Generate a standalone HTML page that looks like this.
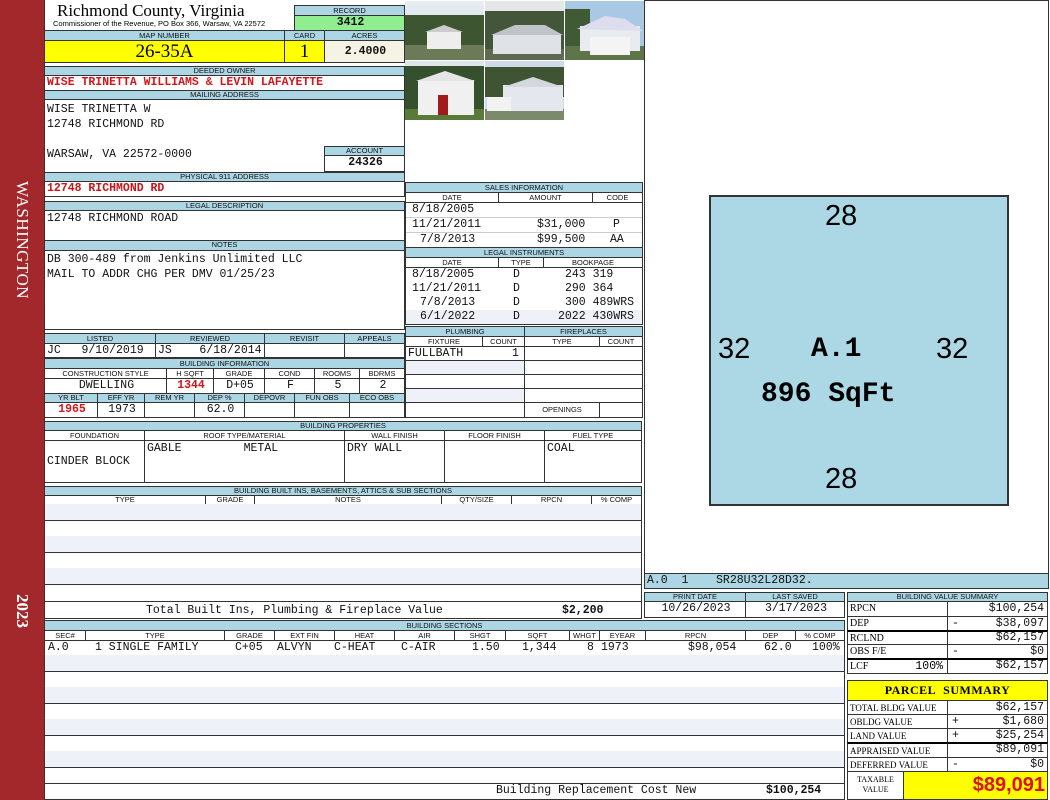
<!DOCTYPE html>
<html><head><meta charset="utf-8"><style>
*{margin:0;padding:0}
body{width:1050px;height:800px;position:relative;background:#fff;overflow:hidden;font-family:"Liberation Sans",sans-serif}
.b{position:absolute;box-sizing:border-box;border:1px solid #333;overflow:hidden;white-space:nowrap}
.h{background:#acd6e4;font-size:7.5px;text-align:center;line-height:8px;color:#111}
.v{font-family:"Liberation Mono",monospace;font-size:11.5px;line-height:14px;padding-left:2px;color:#111}
.c{text-align:center}.r{text-align:right;padding-right:3px}
.red{color:#d4141a;font-weight:bold}
.alt{background:#eef1f8}
.t{position:absolute;white-space:nowrap}
.s{font-family:"Liberation Serif",serif;font-size:10px;line-height:14px;padding-left:2px}
</style></head><body>
<!-- sidebar -->
<div style="position:absolute;left:0;top:0;width:44px;height:800px;background:#a3282b"></div>
<div class="t" style="left:22px;top:240px;transform:translate(-50%,-50%) rotate(90deg);color:#fff;font:17px 'Liberation Serif',serif;letter-spacing:0.5px">WASHINGTON</div>
<div class="t" style="left:22px;top:611px;transform:translate(-50%,-50%) rotate(90deg);color:#fff;font:bold 17px 'Liberation Serif',serif">2023</div>
<div style="position:absolute;left:44px;top:0;width:1px;height:800px;background:#333"></div>

<!-- title -->
<div class="t" style="left:57px;top:2px;font:17px 'Liberation Serif',serif;line-height:18px">Richmond County, Virginia</div>
<div class="t" style="left:53px;top:20px;font-size:7.5px;line-height:8px">Commissioner of the Revenue, PO Box 366, Warsaw, VA 22572</div>
<div class="b h" style="left:294px;top:5px;width:111px;height:11px;line-height:9px">RECORD</div>
<div class="b v c" style="left:294px;top:15px;width:111px;height:16px;background:#90ee90;font-weight:bold;line-height:13px">3412</div>

<div class="b h" style="left:44px;top:30px;width:241px;height:11px;line-height:9px">MAP NUMBER</div>
<div class="b h" style="left:284px;top:30px;width:41px;height:11px;line-height:9px">CARD</div>
<div class="b h" style="left:324px;top:30px;width:81px;height:11px;line-height:9px">ACRES</div>
<div class="b c" style="left:44px;top:40px;width:241px;height:23px;background:#ffff00;font:19px 'Liberation Serif',serif;line-height:21px">26-35A</div>
<div class="b c" style="left:284px;top:40px;width:41px;height:23px;background:#ffff00;font:19px 'Liberation Serif',serif;line-height:21px">1</div>
<div class="b v c" style="left:324px;top:40px;width:81px;height:23px;background:#f5f4e4;font-weight:bold;line-height:21px">2.4000</div>

<div class="b h" style="left:44px;top:66px;width:361px;height:10px">DEEDED OWNER</div>
<div class="b v red" style="left:44px;top:75px;width:361px;height:16px;line-height:14px">WISE TRINETTA WILLIAMS &amp; LEVIN LAFAYETTE</div>
<div class="b h" style="left:44px;top:90px;width:361px;height:10px">MAILING ADDRESS</div>
<div class="b v" style="left:44px;top:99px;width:361px;height:74px;line-height:15px;padding-top:2px">WISE TRINETTA W<br>12748 RICHMOND RD<br><br>WARSAW, VA 22572-0000</div>
<div class="b h" style="left:324px;top:146px;width:81px;height:10px">ACCOUNT</div>
<div class="b v c" style="left:324px;top:155px;width:81px;height:17px;font-weight:bold">24326</div>
<div class="b h" style="left:44px;top:172px;width:361px;height:10px">PHYSICAL 911 ADDRESS</div>
<div class="b v red" style="left:44px;top:181px;width:361px;height:16px;color:#c81418">12748 RICHMOND RD</div>
<div class="b h" style="left:44px;top:201px;width:361px;height:10px">LEGAL DESCRIPTION</div>
<div class="b v" style="left:44px;top:210px;width:361px;height:31px;padding-top:1px">12748 RICHMOND ROAD</div>
<div class="b h" style="left:44px;top:240px;width:361px;height:11px">NOTES</div>
<div class="b v" style="left:44px;top:250px;width:361px;height:80px;line-height:15px;padding-top:1px">DB 300-489 from Jenkins Unlimited LLC<br>MAIL TO ADDR CHG PER DMV 01/25/23</div>

<!-- listed -->
<div class="b h" style="left:44px;top:333px;width:112px;height:11px;line-height:9px">LISTED</div>
<div class="b h" style="left:155px;top:333px;width:110px;height:11px;line-height:9px">REVIEWED</div>
<div class="b h" style="left:264px;top:333px;width:81px;height:11px;line-height:9px">REVISIT</div>
<div class="b h" style="left:344px;top:333px;width:61px;height:11px;line-height:9px">APPEALS</div>
<div class="b v" style="left:44px;top:343px;width:112px;height:15px;line-height:13px">JC&nbsp;&nbsp;&nbsp;9/10/2019</div>
<div class="b v" style="left:155px;top:343px;width:110px;height:15px;line-height:13px">JS&nbsp;&nbsp;&nbsp;&nbsp;6/18/2014</div>
<div class="b" style="left:264px;top:343px;width:81px;height:15px"></div>
<div class="b" style="left:344px;top:343px;width:61px;height:15px"></div>

<div class="b h" style="left:44px;top:358px;width:361px;height:11px;line-height:9px">BUILDING INFORMATION</div>
<div class="b h" style="left:44px;top:368px;width:123px;height:11px;line-height:9px;background:#fff">CONSTRUCTION STYLE</div>
<div class="b h" style="left:166px;top:368px;width:48px;height:11px;line-height:9px;background:#fff">H SQFT</div>
<div class="b h" style="left:213px;top:368px;width:52px;height:11px;line-height:9px;background:#fff">GRADE</div>
<div class="b h" style="left:264px;top:368px;width:51px;height:11px;line-height:9px;background:#fff">COND</div>
<div class="b h" style="left:314px;top:368px;width:46px;height:11px;line-height:9px;background:#fff">ROOMS</div>
<div class="b h" style="left:359px;top:368px;width:46px;height:11px;line-height:9px;background:#fff">BDRMS</div>
<div class="b v c" style="left:44px;top:378px;width:123px;height:16px">DWELLING</div>
<div class="b v c red" style="left:166px;top:378px;width:48px;height:16px">1344</div>
<div class="b v c" style="left:213px;top:378px;width:52px;height:16px">D+05</div>
<div class="b v c" style="left:264px;top:378px;width:51px;height:16px">F</div>
<div class="b v c" style="left:314px;top:378px;width:46px;height:16px">5</div>
<div class="b v c" style="left:359px;top:378px;width:46px;height:16px">2</div>
<div class="b h" style="left:44px;top:393px;width:54px;height:10px">YR BLT</div>
<div class="b h" style="left:97px;top:393px;width:48px;height:10px">EFF YR</div>
<div class="b h" style="left:144px;top:393px;width:51px;height:10px">REM YR</div>
<div class="b h" style="left:194px;top:393px;width:51px;height:10px">DEP %</div>
<div class="b h" style="left:244px;top:393px;width:51px;height:10px">DEPOVR</div>
<div class="b h" style="left:294px;top:393px;width:56px;height:10px">FUN OBS</div>
<div class="b h" style="left:349px;top:393px;width:56px;height:10px">ECO OBS</div>
<div class="b v c red" style="left:44px;top:402px;width:54px;height:16px">1965</div>
<div class="b v c" style="left:97px;top:402px;width:48px;height:16px">1973</div>
<div class="b" style="left:144px;top:402px;width:51px;height:16px"></div>
<div class="b v c" style="left:194px;top:402px;width:51px;height:16px">62.0</div>
<div class="b" style="left:244px;top:402px;width:51px;height:16px"></div>
<div class="b" style="left:294px;top:402px;width:56px;height:16px"></div>
<div class="b" style="left:349px;top:402px;width:56px;height:16px"></div>

<!-- building properties -->
<div class="b h" style="left:44px;top:421px;width:598px;height:10px">BUILDING PROPERTIES</div>
<div class="b h" style="left:44px;top:430px;width:101px;height:11px;line-height:9px;background:#fff">FOUNDATION</div>
<div class="b h" style="left:144px;top:430px;width:201px;height:11px;line-height:9px;background:#fff">ROOF TYPE/MATERIAL</div>
<div class="b h" style="left:344px;top:430px;width:101px;height:11px;line-height:9px;background:#fff">WALL FINISH</div>
<div class="b h" style="left:444px;top:430px;width:101px;height:11px;line-height:9px;background:#fff">FLOOR FINISH</div>
<div class="b h" style="left:544px;top:430px;width:98px;height:11px;line-height:9px;background:#fff">FUEL TYPE</div>
<div class="b v" style="left:44px;top:440px;width:101px;height:43px;padding-top:14px">CINDER BLOCK</div>
<div class="b v" style="left:144px;top:440px;width:201px;height:43px;padding-top:1px">GABLE&nbsp;&nbsp;&nbsp;&nbsp;&nbsp;&nbsp;&nbsp;&nbsp;&nbsp;METAL</div>
<div class="b v" style="left:344px;top:440px;width:101px;height:43px;padding-top:1px">DRY WALL</div>
<div class="b" style="left:444px;top:440px;width:101px;height:43px"></div>
<div class="b v" style="left:544px;top:440px;width:98px;height:43px;padding-top:1px">COAL</div>

<!-- built ins -->
<div class="b h" style="left:44px;top:486px;width:598px;height:10px">BUILDING BUILT INS, BASEMENTS, ATTICS &amp; SUB SECTIONS</div>
<div class="b h" style="left:44px;top:495px;width:162px;height:10px;background:#fff">TYPE</div>
<div class="b h" style="left:205px;top:495px;width:50px;height:10px;background:#fff">GRADE</div>
<div class="b h" style="left:254px;top:495px;width:188px;height:10px;background:#fff">NOTES</div>
<div class="b h" style="left:441px;top:495px;width:71px;height:10px;background:#fff">QTY/SIZE</div>
<div class="b h" style="left:511px;top:495px;width:81px;height:10px;background:#fff">RPCN</div>
<div class="b h" style="left:591px;top:495px;width:51px;height:10px;background:#fff">% COMP</div>
<div class="b alt" style="left:44px;top:504px;width:598px;height:17px;border-top:0"></div>
<div class="b" style="left:44px;top:520px;width:598px;height:17px;border-top:0"></div>
<div class="b alt" style="left:44px;top:536px;width:598px;height:17px;border-top:0"></div>
<div class="b" style="left:44px;top:552px;width:598px;height:17px;border-top:0"></div>
<div class="b alt" style="left:44px;top:568px;width:598px;height:17px;border-top:0"></div>
<div class="b" style="left:44px;top:584px;width:598px;height:18px;border-top:0"></div>
<div class="b v" style="left:44px;top:601px;width:598px;height:18px;line-height:18px"><span style="position:absolute;left:101px">Total Built Ins, Plumbing &amp; Fireplace Value</span><span style="position:absolute;left:517px;font-weight:bold">$2,200</span></div>

<!-- building sections -->
<div class="b h" style="left:44px;top:620px;width:801px;height:11px;line-height:9px">BUILDING SECTIONS</div>
<div class="b h" style="left:44px;top:630px;width:42px;height:11px;line-height:9px;background:#fff">SEC#</div>
<div class="b h" style="left:85px;top:630px;width:140px;height:11px;line-height:9px;background:#fff">TYPE</div>
<div class="b h" style="left:224px;top:630px;width:51px;height:11px;line-height:9px;background:#fff">GRADE</div>
<div class="b h" style="left:274px;top:630px;width:61px;height:11px;line-height:9px;background:#fff">EXT FIN</div>
<div class="b h" style="left:334px;top:630px;width:61px;height:11px;line-height:9px;background:#fff">HEAT</div>
<div class="b h" style="left:394px;top:630px;width:61px;height:11px;line-height:9px;background:#fff">AIR</div>
<div class="b h" style="left:454px;top:630px;width:52px;height:11px;line-height:9px;background:#fff">SHGT</div>
<div class="b h" style="left:505px;top:630px;width:65px;height:11px;line-height:9px;background:#fff">SQFT</div>
<div class="b h" style="left:569px;top:630px;width:31px;height:11px;line-height:9px;background:#fff">WHGT</div>
<div class="b h" style="left:599px;top:630px;width:47px;height:11px;line-height:9px;background:#fff">EYEAR</div>
<div class="b h" style="left:645px;top:630px;width:101px;height:11px;line-height:9px;background:#fff">RPCN</div>
<div class="b h" style="left:745px;top:630px;width:51px;height:11px;line-height:9px;background:#fff">DEP</div>
<div class="b h" style="left:795px;top:630px;width:50px;height:11px;line-height:9px;background:#fff">% COMP</div>
<div class="b v" style="left:44px;top:640px;width:801px;height:16px;border-top:0;line-height:15px">
<span style="position:absolute;left:3px">A.0</span><span style="position:absolute;left:50px">1 SINGLE FAMILY</span><span style="position:absolute;left:190px">C+05</span><span style="position:absolute;left:232px">ALVYN</span><span style="position:absolute;left:289px">C-HEAT</span><span style="position:absolute;left:356px">C-AIR</span><span style="position:absolute;left:427px">1.50</span><span style="position:absolute;left:477px">1,344</span><span style="position:absolute;left:542px">8</span><span style="position:absolute;left:556px">1973</span><span style="position:absolute;left:643px">$98,054</span><span style="position:absolute;left:719px">62.0</span><span style="position:absolute;left:767px">100%</span></div>
<div class="b alt" style="left:44px;top:655px;width:801px;height:17px;border-top:0"></div>
<div class="b" style="left:44px;top:671px;width:801px;height:17px;border-top:0"></div>
<div class="b alt" style="left:44px;top:687px;width:801px;height:17px;border-top:0"></div>
<div class="b" style="left:44px;top:703px;width:801px;height:17px;border-top:0"></div>
<div class="b alt" style="left:44px;top:719px;width:801px;height:17px;border-top:0"></div>
<div class="b" style="left:44px;top:735px;width:801px;height:17px;border-top:0"></div>
<div class="b alt" style="left:44px;top:751px;width:801px;height:17px;border-top:0"></div>
<div class="b" style="left:44px;top:767px;width:801px;height:17px;border-top:0"></div>
<div class="b v" style="left:44px;top:783px;width:801px;height:17px;border-top:0;line-height:16px"><span style="position:absolute;left:451px">Building Replacement Cost New</span><span style="position:absolute;left:721px;font-weight:bold">$100,254</span></div>

<!-- photos -->
<svg style="position:absolute;left:405px;top:1px" width="240" height="120">
<defs><linearGradient id="sk" x1="0" y1="0" x2="0" y2="1"><stop offset="0" stop-color="#e8eef2"/><stop offset="1" stop-color="#c8d4dc"/></linearGradient></defs>
<g><rect x="0" y="0" width="79" height="59" fill="url(#sk)"/><rect x="0" y="14" width="79" height="32" fill="#3d5530"/><rect x="0" y="44" width="79" height="15" fill="#6d7a58"/><rect x="22" y="30" width="34" height="18" fill="#eeeeee"/><polygon points="20,31 39,24 58,31" fill="#ccc"/></g>
<g transform="translate(80,0)"><rect width="79" height="59" fill="#e4e6e8"/><rect y="10" width="79" height="40" fill="#44563a"/><rect y="48" width="79" height="11" fill="#606a50"/><rect x="8" y="33" width="68" height="20" fill="#dfe3e8"/><polygon points="6,34 30,24 60,24 78,34" fill="#bfc4c8"/></g>
<g transform="translate(160,0)"><rect width="79" height="59" fill="#a8c8e4"/><rect y="8" width="25" height="40" fill="#3f5a34"/><rect y="45" width="79" height="14" fill="#5f7448"/><rect x="15" y="25" width="60" height="25" fill="#e8ecef"/><polygon points="12,28 40,15 60,18 78,30" fill="#dde"/><rect x="25" y="36" width="40" height="18" fill="#f4f4f4"/></g>
<g transform="translate(0,60)"><rect width="79" height="59" fill="#dfe6ea"/><rect y="5" width="79" height="45" fill="#34502c"/><rect y="48" width="79" height="11" fill="#5a7a3a"/><rect x="13" y="19" width="56" height="35" fill="#f0f0f0"/><polygon points="11,20 40,10 70,20" fill="#e5e5e5"/><rect x="33" y="34" width="10" height="20" fill="#a01c1c"/></g>
<g transform="translate(80,60)"><rect width="79" height="59" fill="#cfdce8"/><rect y="6" width="79" height="30" fill="#3e5432"/><rect y="48" width="79" height="11" fill="#7b8a6a"/><rect x="18" y="24" width="60" height="26" fill="#e4e8ee"/><polygon points="18,26 48,16 78,26" fill="#d4d8de"/><rect x="2" y="36" width="24" height="14" fill="#f2f2f2"/></g>
</svg>

<!-- sales -->
<div class="b h" style="left:405px;top:182px;width:238px;height:11px;line-height:9px">SALES INFORMATION</div>
<div class="b h" style="left:405px;top:192px;width:94px;height:11px;line-height:9px;background:#fff">DATE</div>
<div class="b h" style="left:498px;top:192px;width:95px;height:11px;line-height:9px;background:#fff">AMOUNT</div>
<div class="b h" style="left:592px;top:192px;width:51px;height:11px;line-height:9px;background:#fff">CODE</div>
<div class="b v" style="left:405px;top:202px;width:238px;height:46px;line-height:14.5px">
<span style="position:absolute;left:6px;top:0">8/18/2005</span>
<span style="position:absolute;left:6px;top:15px">11/21/2011</span><span style="position:absolute;left:131px;top:15px">$31,000</span><span style="position:absolute;left:207px;top:15px">P</span>
<span style="position:absolute;left:14px;top:30px">7/8/2013</span><span style="position:absolute;left:131px;top:30px">$99,500</span><span style="position:absolute;left:204px;top:30px">AA</span>
<div style="position:absolute;left:0;top:14px;width:238px;border-top:1px solid #ccc"></div><div style="position:absolute;left:0;top:29px;width:238px;border-top:1px solid #ccc"></div></div>
<div class="b h" style="left:405px;top:247px;width:238px;height:11px;line-height:9px">LEGAL INSTRUMENTS</div>
<div class="b h" style="left:405px;top:257px;width:94px;height:11px;line-height:9px;background:#fff">DATE</div>
<div class="b h" style="left:498px;top:257px;width:46px;height:11px;line-height:9px;background:#fff">TYPE</div>
<div class="b h" style="left:543px;top:257px;width:100px;height:11px;line-height:9px;background:#fff">BOOKPAGE</div>
<div class="b v" style="left:405px;top:267px;width:238px;height:58px;line-height:14px">
<div style="position:absolute;left:0;top:42px;width:238px;height:15px;background:#eef1f8"></div>
<span style="position:absolute;left:6px;top:0">8/18/2005</span><span style="position:absolute;left:107px;top:0">D</span><span style="position:absolute;left:159px;top:0">243 319</span>
<span style="position:absolute;left:6px;top:14px">11/21/2011</span><span style="position:absolute;left:107px;top:14px">D</span><span style="position:absolute;left:159px;top:14px">290 364</span>
<span style="position:absolute;left:14px;top:28px">7/8/2013</span><span style="position:absolute;left:107px;top:28px">D</span><span style="position:absolute;left:159px;top:28px">300 489WRS</span>
<span style="position:absolute;left:14px;top:42px">6/1/2022</span><span style="position:absolute;left:107px;top:42px">D</span><span style="position:absolute;left:152px;top:42px">2022 430WRS</span></div>

<div class="b h" style="left:405px;top:326px;width:120px;height:11px;line-height:9px">PLUMBING</div>
<div class="b h" style="left:524px;top:326px;width:119px;height:11px;line-height:9px">FIREPLACES</div>
<div class="b h" style="left:405px;top:336px;width:78px;height:11px;line-height:9px;background:#fff">FIXTURE</div>
<div class="b h" style="left:482px;top:336px;width:43px;height:11px;line-height:9px;background:#fff">COUNT</div>
<div class="b h" style="left:524px;top:336px;width:76px;height:11px;line-height:9px;background:#fff">TYPE</div>
<div class="b h" style="left:599px;top:336px;width:44px;height:11px;line-height:9px;background:#fff">COUNT</div>
<div class="b v" style="left:405px;top:346px;width:120px;height:15px;line-height:14px">FULLBATH<span style="position:absolute;left:106px">1</span></div>
<div class="b alt" style="left:405px;top:360px;width:120px;height:15px"></div>
<div class="b" style="left:405px;top:374px;width:120px;height:15px"></div>
<div class="b alt" style="left:405px;top:388px;width:120px;height:15px"></div>
<div class="b" style="left:405px;top:402px;width:120px;height:16px"></div>
<div class="b" style="left:524px;top:346px;width:119px;height:15px"></div>
<div class="b" style="left:524px;top:360px;width:119px;height:15px"></div>
<div class="b" style="left:524px;top:374px;width:119px;height:15px"></div>
<div class="b" style="left:524px;top:388px;width:119px;height:15px"></div>
<div class="b h" style="left:524px;top:402px;width:76px;height:16px;background:#fff;line-height:14px">OPENINGS</div>
<div class="b" style="left:599px;top:402px;width:44px;height:16px"></div>

<!-- sketch -->
<div class="b" style="left:644px;top:0;width:405px;height:574px"></div>
<div style="position:absolute;left:709px;top:195px;width:300px;height:311px;box-sizing:border-box;border:2px solid #333;background:#acd8e6"></div>
<div class="t" style="left:825px;top:200px;font:29px 'Liberation Sans',sans-serif">28</div>
<div class="t" style="left:825px;top:463px;font:29px 'Liberation Sans',sans-serif">28</div>
<div class="t" style="left:718px;top:333px;font:29px 'Liberation Sans',sans-serif">32</div>
<div class="t" style="left:936px;top:333px;font:29px 'Liberation Sans',sans-serif">32</div>
<div class="t" style="left:811px;top:334px;font:bold 28px 'Liberation Mono',monospace">A.1</div>
<div class="t" style="left:761px;top:379px;font:bold 28px 'Liberation Mono',monospace">896 SqFt</div>
<div class="b v" style="left:644px;top:573px;width:405px;height:16px;background:#acd6e4;line-height:14px">A.0&nbsp;&nbsp;1&nbsp;&nbsp;&nbsp;&nbsp;SR28U32L28D32.</div>

<div class="b h" style="left:644px;top:592px;width:102px;height:10px">PRINT DATE</div>
<div class="b h" style="left:745px;top:592px;width:100px;height:10px">LAST SAVED</div>
<div class="b v c" style="left:644px;top:601px;width:102px;height:17px">10/26/2023</div>
<div class="b v c" style="left:745px;top:601px;width:100px;height:17px">3/17/2023</div>

<!-- building value summary -->
<div class="b h" style="left:847px;top:592px;width:201px;height:10px">BUILDING VALUE SUMMARY</div>
<div class="b s" style="left:847px;top:601px;width:101px;height:16px">RPCN</div>
<div class="b v r" style="left:947px;top:601px;width:101px;height:16px">$100,254</div>
<div class="b s" style="left:847px;top:616px;width:101px;height:15px">DEP</div>
<div class="b v r" style="left:947px;top:616px;width:101px;height:15px;line-height:13px"><span style="position:absolute;left:4px">-</span>$38,097</div>
<div class="b s" style="left:847px;top:630px;width:101px;height:15px;border-top:2px solid #000">RCLND</div>
<div class="b v r" style="left:947px;top:630px;width:101px;height:15px;border-top:2px solid #000;line-height:12px">$62,157</div>
<div class="b s" style="left:847px;top:644px;width:101px;height:15px">OBS F/E</div>
<div class="b v r" style="left:947px;top:644px;width:101px;height:15px;line-height:13px"><span style="position:absolute;left:4px">-</span>$0</div>
<div class="b s" style="left:847px;top:658px;width:101px;height:16px;border-top:2px solid #000">LCF<span style="position:absolute;right:4px;font-family:'Liberation Mono';font-size:11.5px">100%</span></div>
<div class="b v r" style="left:947px;top:658px;width:101px;height:16px;border-top:2px solid #000;line-height:12px">$62,157</div>

<!-- parcel summary -->
<div class="b c" style="left:847px;top:680px;width:201px;height:21px;background:#ffff00;font:bold 12px 'Liberation Serif',serif;line-height:19px;letter-spacing:0.5px">PARCEL&nbsp;&nbsp;SUMMARY</div>
<div class="b s" style="left:847px;top:700px;width:101px;height:15px;font-size:9px">TOTAL BLDG VALUE</div>
<div class="b v r" style="left:947px;top:700px;width:101px;height:15px;line-height:13px">$62,157</div>
<div class="b s" style="left:847px;top:714px;width:101px;height:15px;font-size:9px">OBLDG VALUE</div>
<div class="b v r" style="left:947px;top:714px;width:101px;height:15px;line-height:13px"><span style="position:absolute;left:4px">+</span>$1,680</div>
<div class="b s" style="left:847px;top:728px;width:101px;height:15px;font-size:9px">LAND VALUE</div>
<div class="b v r" style="left:947px;top:728px;width:101px;height:15px;line-height:13px"><span style="position:absolute;left:4px">+</span>$25,254</div>
<div class="b s" style="left:847px;top:742px;width:101px;height:16px;font-size:9px;border-top:2px solid #000">APPRAISED VALUE</div>
<div class="b v r" style="left:947px;top:742px;width:101px;height:16px;border-top:2px solid #000;line-height:12px">$89,091</div>
<div class="b s" style="left:847px;top:757px;width:101px;height:15px;font-size:9px">DEFERRED VALUE</div>
<div class="b v r" style="left:947px;top:757px;width:101px;height:15px;line-height:13px"><span style="position:absolute;left:4px">-</span>$0</div>
<div class="b c" style="left:847px;top:771px;width:57px;height:29px;font:8px 'Liberation Serif',serif;line-height:10px;padding-top:3px">TAXABLE<br>VALUE</div>
<div class="b" style="left:903px;top:771px;width:145px;height:29px;background:#ffff00;color:#e01010;font:bold 20px 'Liberation Sans',sans-serif;text-align:right;padding-right:2px;line-height:26px">$89,091</div>
</body></html>
